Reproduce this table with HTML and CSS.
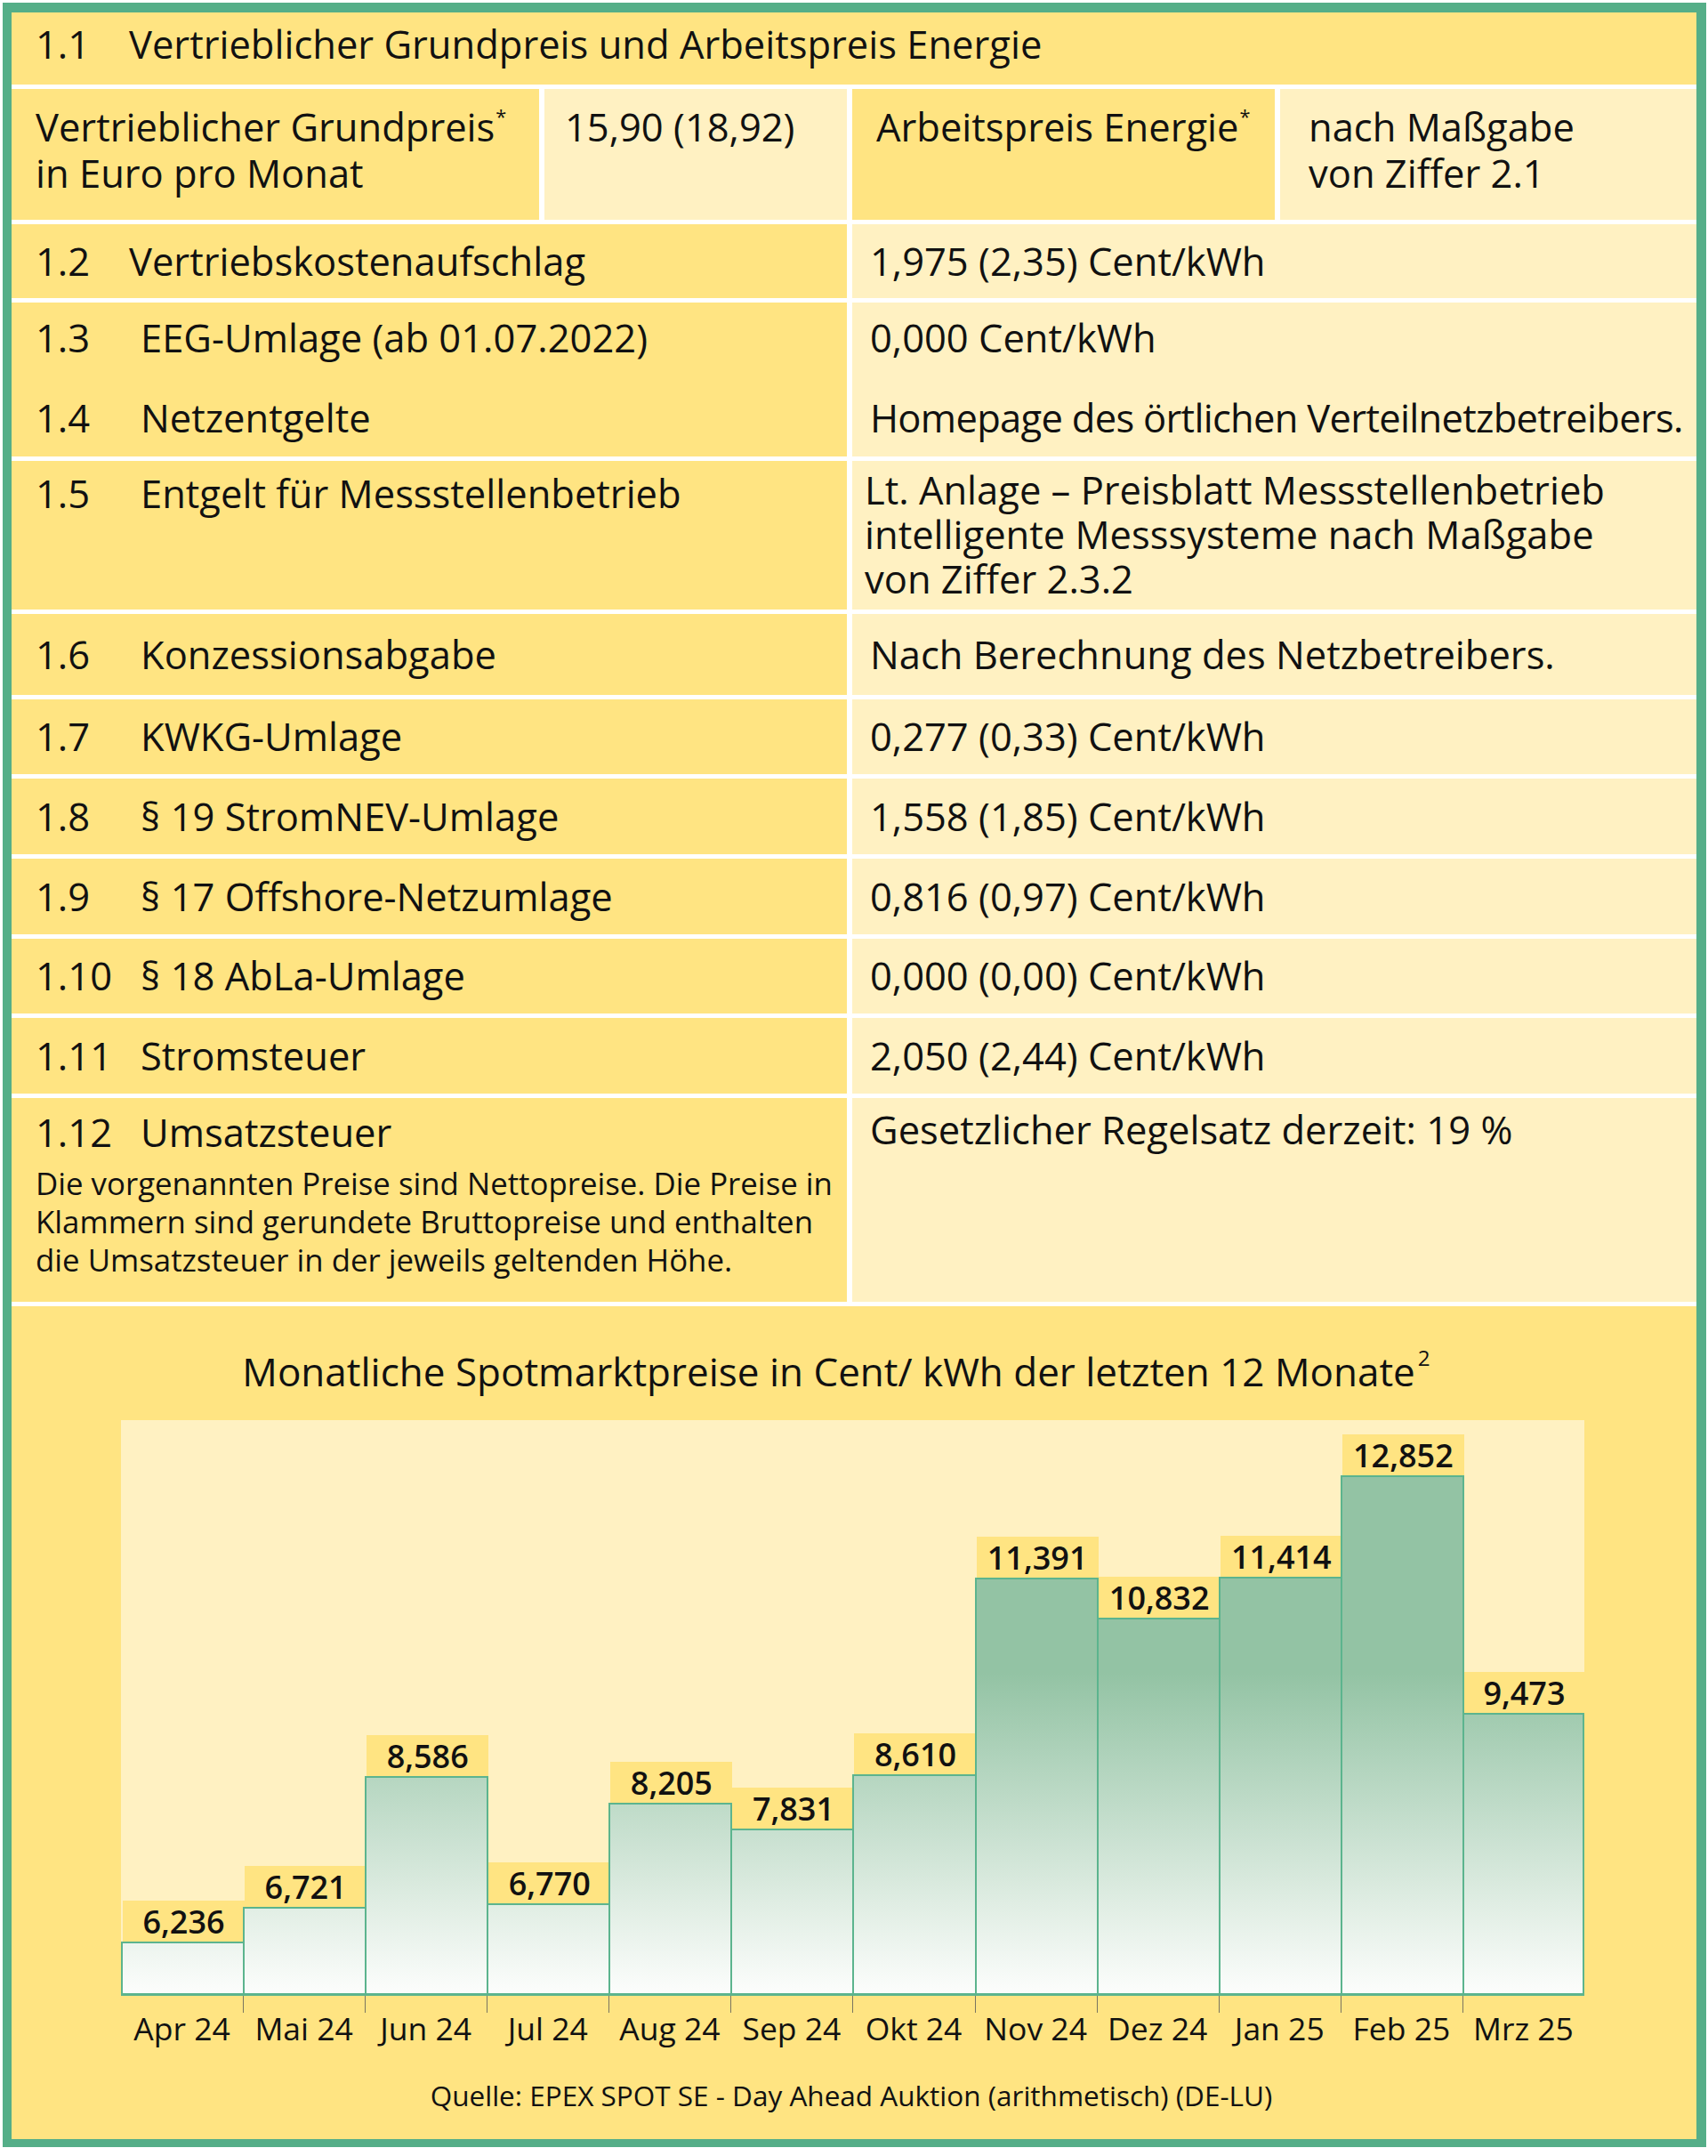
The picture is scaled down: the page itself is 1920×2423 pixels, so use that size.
FILE: index.html
```html
<!DOCTYPE html>
<html lang="de">
<head>
<meta charset="utf-8">
<title>Preisblatt</title>
<link rel="stylesheet" href="styles.css">
</head>
<body>
<div class="page">
  <div class="frame">
    <div class="table">
      <div class="row row-head">
        <div class="cell yellow cell-l full"><span class="num short">1.1</span>Vertrieblicher Grundpreis und Arbeitspreis Energie</div>
      </div>

      <div class="row row-base">
        <div class="cell yellow cell-l">Vertrieblicher Grundpreis<sup>*</sup><br>in Euro pro Monat</div>
        <div class="cell light cell-c2">15,90 (18,92)</div>
        <div class="cell yellow cell-c3">Arbeitspreis Energie<sup>*</sup></div>
        <div class="cell light cell-c4">nach Maßgabe<br>von Ziffer 2.1</div>
      </div>

      <div class="row row-12">
        <div class="cell yellow cell-l mid"><span class="num short">1.2</span>Vertriebskostenaufschlag</div>
        <div class="cell light cell-r mid">1,975 (2,35) Cent/kWh</div>
      </div>

      <div class="row row-134">
        <div class="cell yellow cell-l pair">
          <div><span class="num">1.3</span>EEG-Umlage (ab 01.07.2022)</div>
          <div><span class="num">1.4</span>Netzentgelte</div>
        </div>
        <div class="cell light cell-r pair">
          <div>0,000 Cent/kWh</div>
          <div class="tight">Homepage des örtlichen Verteilnetzbetreibers.</div>
        </div>
      </div>

      <div class="row row-15">
        <div class="cell yellow cell-l top11"><span class="num">1.5</span>Entgelt für Messstellenbetrieb</div>
        <div class="cell light cell-r15">Lt. Anlage – Preisblatt Messstellenbetrieb<br>intelligente Messsysteme nach Maßgabe<br>von Ziffer 2.3.2</div>
      </div>

      <div class="row row-16">
        <div class="cell yellow cell-l mid"><span class="num">1.6</span>Konzessionsabgabe</div>
        <div class="cell light cell-r mid">Nach Berechnung des Netzbetreibers.</div>
      </div>

      <div class="row row-s84">
        <div class="cell yellow cell-l mid"><span class="num">1.7</span>KWKG-Umlage</div>
        <div class="cell light cell-r mid">0,277 (0,33) Cent/kWh</div>
      </div>

      <div class="row row-s85">
        <div class="cell yellow cell-l mid"><span class="num">1.8</span>§ 19 StromNEV-Umlage</div>
        <div class="cell light cell-r mid">1,558 (1,85) Cent/kWh</div>
      </div>

      <div class="row row-s85">
        <div class="cell yellow cell-l mid"><span class="num">1.9</span>§ 17 Offshore-Netzumlage</div>
        <div class="cell light cell-r mid">0,816 (0,97) Cent/kWh</div>
      </div>

      <div class="row row-s84">
        <div class="cell yellow cell-l mid"><span class="num">1.10</span>§ 18 AbLa-Umlage</div>
        <div class="cell light cell-r mid">0,000 (0,00) Cent/kWh</div>
      </div>

      <div class="row row-s85">
        <div class="cell yellow cell-l mid"><span class="num">1.11</span>Stromsteuer</div>
        <div class="cell light cell-r mid">2,050 (2,44) Cent/kWh</div>
      </div>

      <div class="row row-112">
        <div class="cell yellow cell-l top13">
          <div><span class="num">1.12</span>Umsatzsteuer</div>
          <div class="note">Die vorgenannten Preise sind Nettopreise. Die Preise in<br>Klammern sind gerundete Bruttopreise und enthalten<br>die Umsatzsteuer in der jeweils geltenden Höhe.</div>
        </div>
        <div class="cell light cell-r top10">Gesetzlicher Regelsatz derzeit: 19 %</div>
      </div>
    </div>

    <div class="chart">
      <div class="chart-title">Monatliche Spotmarktpreise in Cent/ kWh der letzten 12 Monate<sup>2</sup></div>
      <div class="plot">
        <div class="col"><div class="val">6,236</div><div class="bar" style="height:58px"></div></div>
        <div class="col"><div class="val">6,721</div><div class="bar" style="height:97px"></div></div>
        <div class="col"><div class="val">8,586</div><div class="bar" style="height:244px"></div></div>
        <div class="col"><div class="val">6,770</div><div class="bar" style="height:101px"></div></div>
        <div class="col"><div class="val">8,205</div><div class="bar" style="height:214px"></div></div>
        <div class="col"><div class="val">7,831</div><div class="bar" style="height:185px"></div></div>
        <div class="col"><div class="val">8,610</div><div class="bar" style="height:246px"></div></div>
        <div class="col"><div class="val">11,391</div><div class="bar" style="height:467px"></div></div>
        <div class="col"><div class="val">10,832</div><div class="bar" style="height:422px"></div></div>
        <div class="col"><div class="val">11,414</div><div class="bar" style="height:468px"></div></div>
        <div class="col"><div class="val">12,852</div><div class="bar" style="height:582px"></div></div>
        <div class="col last"><div class="val">9,473</div><div class="bar" style="height:315px"></div></div>

        <div class="baseline"></div>

        <div class="tick first"></div><div class="tick"></div><div class="tick"></div><div class="tick"></div>
        <div class="tick"></div><div class="tick"></div><div class="tick"></div><div class="tick"></div>
        <div class="tick"></div><div class="tick"></div><div class="tick"></div><div class="tick"></div>

        <div class="month">Apr 24</div><div class="month">Mai 24</div><div class="month">Jun 24</div>
        <div class="month">Jul 24</div><div class="month">Aug 24</div><div class="month">Sep 24</div>
        <div class="month">Okt 24</div><div class="month">Nov 24</div><div class="month">Dez 24</div>
        <div class="month">Jan 25</div><div class="month">Feb 25</div><div class="month">Mrz 25</div>
      </div>
      <div class="source">Quelle: EPEX SPOT SE - Day Ahead Auktion (arithmetisch) (DE-LU)</div>
    </div>
  </div>
</div>
</body>
</html>
```

FILE: styles.css
```css
* { box-sizing: border-box; }

html, body {
  margin: 0;
  padding: 0;
}

body {
  background: #ffffff;
  font-family: "Open Sans", "Noto Sans", "DejaVu Sans", sans-serif;
  color: #111111;
}

.page {
  padding: 3px 2px 10px 3px;
}

.frame {
  border-style: solid;
  border-color: #55ae88;
  border-width: 11px 11px 9px 10px;
  background: #ffffff;
}

/* ---------- table ---------- */
.table {
  display: flex;
  flex-direction: column;
  gap: 5px;
  padding-bottom: 5px;
  background: #ffffff;
}

.row {
  display: grid;
  grid-template-columns: 939px 1fr;
  column-gap: 6px;
  font-size: 43.5px;
  line-height: 52px;
}

.row-head { grid-template-columns: 1fr; height: 81px; }
.row-base { grid-template-columns: 593px 340px 475px 1fr; height: 147px; }
.row-12 { height: 83px; }
.row-134 { height: 173px; }
.row-15 { height: 167px; }
.row-16 { height: 91px; }
.row-s84 { height: 84px; }
.row-s85 { height: 85px; }
.row-112 { height: 229px; }

.yellow { background: #ffe482; }
.light { background: #fff1c2; }

.cell { white-space: nowrap; }

.full { padding-top: 10px; }

.cell-l { padding-left: 27px; }
.cell-r { padding-left: 20px; }

.row-base .cell { padding-top: 17px; }
.cell-c2 { padding-left: 23px; }
.cell-c3 { padding-left: 27px; }
.cell-c4 { padding-left: 32px; }

sup {
  font-size: 0.5em;
  line-height: 0;
  vertical-align: 0.9em;
  margin-left: 1px;
}

.mid {
  display: flex;
  align-items: center;
}

.num {
  display: inline-block;
  width: 118px;
}
.num.short { width: 105px; }

.pair {
  display: flex;
  flex-direction: column;
  gap: 38px;
  padding-top: 14px;
}

.tight { letter-spacing: -0.7px; }

.top11 { padding-top: 11px; }
.top13 { padding-top: 13px; }
.top10 { padding-top: 10px; }

.cell-r15 {
  padding-left: 14px;
  padding-top: 8px;
  line-height: 50px;
}

.note {
  margin-top: 9px;
  font-size: 34.8px;
  line-height: 43px;
}

/* ---------- chart ---------- */
.chart {
  background: #ffe482;
  height: 936px;
  padding-top: 47px;
}

.chart-title {
  text-align: center;
  font-size: 44px;
  line-height: 52px;
  padding-right: 40px;
}

.chart-title sup {
  font-size: 0.55em;
  vertical-align: 0.95em;
  margin-left: 3px;
}

.plot {
  margin-top: 29px;
  margin-left: 123px;
  width: 1645px;
  display: grid;
  grid-template-columns: repeat(12, 1fr);
  grid-template-rows: 644px 3px 19px auto;
  background: linear-gradient(#fff1c2, #fff1c2) top left / 100% 644px no-repeat;
}

.col {
  grid-row: 1;
  display: flex;
  flex-direction: column;
  justify-content: flex-end;
  min-width: 0;
}

.val {
  height: 46px;
  width: 100%;
  margin-left: 2px;
  background: #ffe482;
  text-align: center;
  font-size: 36px;
  line-height: 46px;
  font-weight: 600;
  padding-top: 1px;
  white-space: nowrap;
}

.bar {
  width: calc(100% + 2px);
  border-top: 2px solid #5cb48e;
  border-left: 2px solid #5cb48e;
  border-right: 2px solid #5cb48e;
  background: linear-gradient(to top, #fcfdfc 0px, #e3efe6 90px, #93c3a4 360px);
}

.col.last .val { width: calc(100% - 2px); }
.col.last .bar { width: 100%; }

.baseline {
  grid-row: 2;
  grid-column: 1 / -1;
  background: #5cb48e;
}

.tick {
  grid-row: 3;
  border-left: 1px solid #7a7560;
}
.tick.first { border-left: none; }

.month {
  grid-row: 4;
  margin-top: -3px;
  text-align: center;
  font-size: 35.5px;
  line-height: 40px;
  white-space: nowrap;
}

.source {
  margin-top: 36px;
  text-align: center;
  font-size: 31.5px;
  line-height: 40px;
  padding-right: 6px;
}
```
